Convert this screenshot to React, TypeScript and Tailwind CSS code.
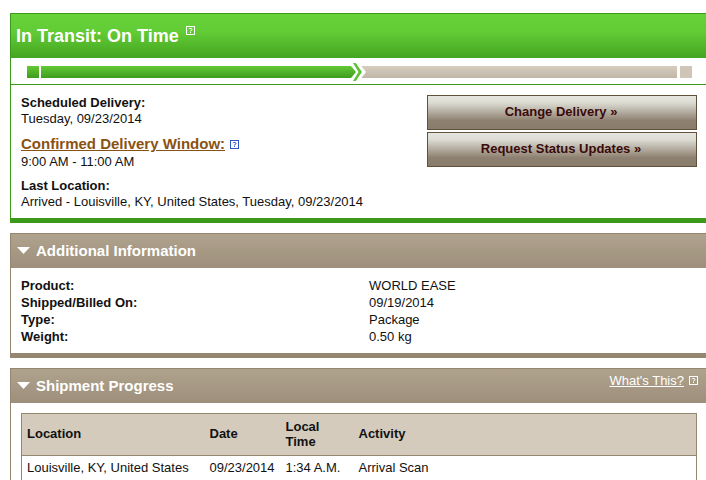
import React from "react";

const sans = "font-['Liberation_Sans',Arial,sans-serif]";

function HelpIcon({ color = "#ffffff" }: { color?: string }) {
    return (
        <svg width="9" height="9" viewBox="0 0 9 9" className="inline-block shrink-0">
            <rect x="0.5" y="0.5" width="8" height="8" fill="none" stroke={color} strokeWidth="1" />
            <path d="M3 3.2 L3.5 2.5 H5.4 L6 3.2 V3.9 L4.5 4.8 V5.3 M4.5 5.9 V7" fill="none" stroke={color} strokeWidth="1" />
        </svg>
    );
}

function Triangle() {
    return (
        <svg width="13" height="7" viewBox="0 0 13 7" className="shrink-0">
            <path d="M0 0 H13 L6.5 7 Z" fill="#ffffff" />
        </svg>
    );
}

function InfoRow({ label, value }: { label: string; value: string }) {
    return (
        <div className="flex h-[17px] items-center">
            <div className="w-[348px] font-bold">{label}</div>
            <div>{value}</div>
        </div>
    );
}

export default function App() {
    return (
        <div className={`${sans} h-[480px] w-[706px] overflow-hidden bg-white pl-[10px] pt-[13px] text-[13px] leading-[17px] text-[#111111] antialiased`}>
            {/* Status panel */}
            <div className="border-l border-[#3c9a1a]">
                <div className="flex h-[45px] items-start border-t border-[#3c9a1a] bg-[linear-gradient(#68d23a_0%,#62cc36_40%,#44a520_100%)] pl-[5px] pt-[11px]">
                    <span className="text-[18px] font-bold leading-[22px] text-white">In Transit: On Time</span>
                    <span className="ml-[7px] mt-[1px] flex"><HelpIcon /></span>
                </div>

                <div className="flex h-[27px] items-center border-b border-[#3c9a1a] pl-[16px] pt-[2px]">
                    <div className="h-[12px] w-[12px] bg-[linear-gradient(#62c936,#3f9c1e)]" />
                    <div className="ml-[2px] h-[12px] w-[310px] bg-[linear-gradient(#62c936,#3f9c1e)]" />
                    <svg width="17" height="18" viewBox="0 0 17 18" className="relative z-10 shrink-0">
                        <defs>
                            <linearGradient id="tip" x1="0" y1="0" x2="0" y2="1">
                                <stop offset="0" stopColor="#62c936" />
                                <stop offset="1" stopColor="#3f9c1e" />
                            </linearGradient>
                        </defs>
                        <path d="M0 3 L5 9 L0 15 Z" fill="url(#tip)" />
                        <path d="M2 0 H5 L11 9 L5 18 H2 L7.5 9 Z" fill="#5cc432" />
                        <path d="M5 0 H8 L15 9 L8 18 H5 L11 9 Z" fill="#ffffff" />
                    </svg>
                    <div className="ml-[-8px] h-[12px] w-[317px] bg-[linear-gradient(#d6cdbf,#c1b7a7)]" />
                    <div className="ml-[3px] h-[12px] w-[12px] bg-[#cfc6b8]" />
                </div>

                <div className="flex h-[133px] justify-between pr-[9px]">
                    <div className="pl-[10px] pt-[9px]">
                        <div className="font-bold">Scheduled Delivery:</div>
                        <div className="mt-[-1px]">Tuesday, 09/23/2014</div>
                        <div className="mt-[8px] flex items-center">
                            <a className="text-[15px] font-bold leading-[18px] text-[#8a5212] underline">Confirmed Delivery Window:</a>
                            <span className="ml-[5px] flex"><HelpIcon color="#2f55c4" /></span>
                        </div>
                        <div>9:00 AM - 11:00 AM</div>
                        <div className="mt-[7px] font-bold">Last Location:</div>
                        <div className="mt-[-1px]">Arrived - Louisville, KY, United States, Tuesday, 09/23/2014</div>
                    </div>
                    <div className="flex w-[270px] flex-col gap-[2px] pt-[10px]">
                        <button className="h-[35px] border border-[#60503c] bg-[linear-gradient(#e6e6df_0%,#dcdcd3_20%,#8e8070_75%,#8a7c6a_100%)] pb-[2px] pr-[2px] font-bold text-[#3a0a0a]">Change Delivery »</button>
                        <button className="h-[35px] border border-[#60503c] bg-[linear-gradient(#e6e6df_0%,#dcdcd3_20%,#8e8070_75%,#8a7c6a_100%)] pb-[2px] pr-[2px] font-bold text-[#3a0a0a]">Request Status Updates »</button>
                    </div>
                </div>
            </div>
            <div className="h-[5px] bg-[#3c9a1a]" />

            {/* Additional Information */}
            <div className="mt-[10px] border-l border-[#94866f]">
                <div className="flex h-[35px] items-center gap-[6px] border-t border-[#94866f] bg-[linear-gradient(#b0a38e,#9d8f7b)] pb-[2px] pl-[6px]">
                    <Triangle />
                    <span className="text-[15px] font-bold text-white">Additional Information</span>
                </div>
                <div className="h-[85px] pl-[10px] pt-[9px]">
                    <InfoRow label="Product:" value="WORLD EASE" />
                    <InfoRow label="Shipped/Billed On:" value="09/19/2014" />
                    <InfoRow label="Type:" value="Package" />
                    <InfoRow label="Weight:" value="0.50 kg" />
                </div>
            </div>
            <div className="h-[5px] bg-[#94866f]" />

            {/* Shipment Progress */}
            <div className="mt-[10px] border-l border-[#94866f]">
                <div className="flex h-[35px] items-center justify-between border-t border-[#94866f] bg-[linear-gradient(#b0a38e,#9d8f7b)] pb-[2px] pl-[6px] pr-[8px]">
                    <div className="flex items-center gap-[6px]">
                        <Triangle />
                        <span className="text-[15px] font-bold text-white">Shipment Progress</span>
                    </div>
                    <div className="mb-[9px] flex items-center gap-[5px]">
                        <a className="text-[13px] text-white underline">What's This?</a>
                        <HelpIcon />
                    </div>
                </div>
                <div className="pl-[10px] pr-[9px] pt-[10px]">
                    <table className="w-[676px] table-fixed border-collapse border border-[#94866f]">
                        <thead>
                            <tr className="h-[42px] border-b border-[#94866f] bg-[#d4cbbd] text-left font-bold">
                                <th className="w-[183px] pb-[2px] pl-[5px]">Location</th>
                                <th className="w-[76px] pb-[2px] pl-[5px]">Date</th>
                                <th className="w-[73px] pb-[2px] pl-[5px] leading-[15px]">Local<br />Time</th>
                                <th className="pb-[2px] pl-[5px]">Activity</th>
                            </tr>
                        </thead>
                        <tbody>
                            <tr className="h-[25px]">
                                <td className="pb-[2px] pl-[5px]">Louisville, KY, United States</td>
                                <td className="pb-[2px] pl-[5px]">09/23/2014</td>
                                <td className="pb-[2px] pl-[5px]">1:34 A.M.</td>
                                <td className="pb-[2px] pl-[5px]">Arrival Scan</td>
                            </tr>
                        </tbody>
                    </table>
                </div>
            </div>
        </div>
    );
}
